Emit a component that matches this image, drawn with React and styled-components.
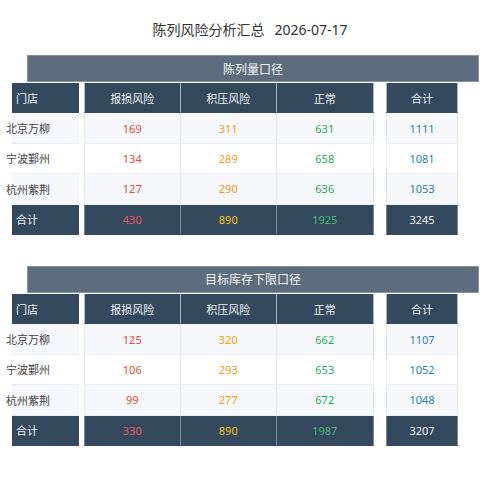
import React from "react";
import styled, { createGlobalStyle } from "styled-components";

const GlobalStyle = createGlobalStyle`
  body {
    margin: 0;
    background: #ffffff;
    font-family: "Noto Sans", "Noto Sans CJK SC", sans-serif;
  }
`;

const colors = {
  dark: "#34495e",
  group: "#5d6d7e",
  red: "#e74c3c",
  orange: "#f39c12",
  green: "#27ae60",
  blue: "#2980b9",
  yellow: "#f1c40f",
  greenLight: "#3fbf6f",
};

const Page = styled.div`
  width: 500px;
  height: 478px;
`;

const Title = styled.div`
  box-sizing: border-box;
  height: 55px;
  padding-top: 3px;
  display: flex;
  align-items: center;
  justify-content: center;
  gap: 10px;
  font-size: 14px;
  color: #333;
`;

const Section = styled.section`
  margin-bottom: 31px;
`;

const GroupHeader = styled.div`
  box-sizing: border-box;
  margin-left: 27px;
  width: 452px;
  height: 27px;
  margin-bottom: 1px;
  background: ${colors.group};
  border: 1px solid #8793a0;
  display: flex;
  align-items: center;
  justify-content: center;
  color: #f2f4f6;
  font-size: 12px;
`;

const Row = styled.div`
  display: grid;
  grid-template-columns: 67px 5px 96.5px 96.5px 96.5px 12.5px 72px;
  margin-left: 12px;
  height: 30.4px;
  font-size: 11px;
`;

const bgFor = (kind, odd) => {
  if (kind === "head" || kind === "total") return colors.dark;
  return odd ? "#f5f7fa" : "#ffffff";
};

const lineFor = (kind) =>
  kind === "head" ? "#aeb7c2" : kind === "total" ? "#7d8a98" : "#e3e7ec";

const NameCell = styled.div`
  box-sizing: border-box;
  display: flex;
  align-items: center;
  background: ${(p) => bgFor(p.$kind, p.$odd)};
  border-bottom: 1px solid ${(p) => (p.$kind === "data" ? "#eceff3" : "transparent")};
  color: ${(p) => (p.$kind === "data" ? "#444" : "#eef1f4")};
  padding-left: ${(p) => (p.$kind === "data" ? "0" : "4px")};
  white-space: nowrap;

  span {
    margin-left: ${(p) => (p.$kind === "data" ? "-6px" : "0")};
  }
`;

const Spacer = styled.div`
  background: #ffffff;
`;

const ValueCell = styled.div`
  box-sizing: border-box;
  display: flex;
  align-items: center;
  justify-content: center;
  background: ${(p) => bgFor(p.$kind, p.$odd)};
  border-right: 1px solid ${(p) => lineFor(p.$kind)};
  border-left: ${(p) => (p.$lead ? `1px solid ${lineFor(p.$kind)}` : "none")};
  border-bottom: 1px solid ${(p) => (p.$kind === "data" ? "#eceff3" : "transparent")};
  color: ${(p) => p.$color || "#eef1f4"};
`;

const dataColors = [colors.red, colors.orange, colors.green, colors.blue];
const totalColors = ["#e85c58", colors.yellow, colors.greenLight, "#f2f4f6"];

const TableRow = ({ kind, odd, name, values, palette }) => (
  <Row>
    <NameCell $kind={kind} $odd={odd}>
      <span>{name}</span>
    </NameCell>
    <Spacer />
    {values.slice(0, 3).map((v, i) => (
      <ValueCell key={i} $kind={kind} $odd={odd} $lead={i === 0} $color={palette && palette[i]}>
        {v}
      </ValueCell>
    ))}
    <Spacer />
    <ValueCell $kind={kind} $odd={odd} $lead $color={palette && palette[3]}>
      {values[3]}
    </ValueCell>
  </Row>
);

const tables = [
  {
    title: "陈列量口径",
    rows: [
      ["北京万柳", 169, 311, 631, 1111],
      ["宁波鄞州", 134, 289, 658, 1081],
      ["杭州紫荆", 127, 290, 636, 1053],
    ],
    total: [430, 890, 1925, 3245],
  },
  {
    title: "目标库存下限口径",
    rows: [
      ["北京万柳", 125, 320, 662, 1107],
      ["宁波鄞州", 106, 293, 653, 1052],
      ["杭州紫荆", 99, 277, 672, 1048],
    ],
    total: [330, 890, 1987, 3207],
  },
];

export default function App() {
  return (
    <Page>
      <GlobalStyle />
      <Title>
        <span>陈列风险分析汇总</span>
        <span>2026-07-17</span>
      </Title>
      {tables.map((t) => (
        <Section key={t.title}>
          <GroupHeader>{t.title}</GroupHeader>
          <TableRow kind="head" name="门店" values={["报损风险", "积压风险", "正常", "合计"]} />
          {t.rows.map((r, i) => (
            <TableRow
              key={r[0]}
              kind="data"
              odd={i % 2 === 0}
              name={r[0]}
              values={r.slice(1)}
              palette={dataColors}
            />
          ))}
          <TableRow kind="total" name="合计" values={t.total} palette={totalColors} />
        </Section>
      ))}
    </Page>
  );
}
